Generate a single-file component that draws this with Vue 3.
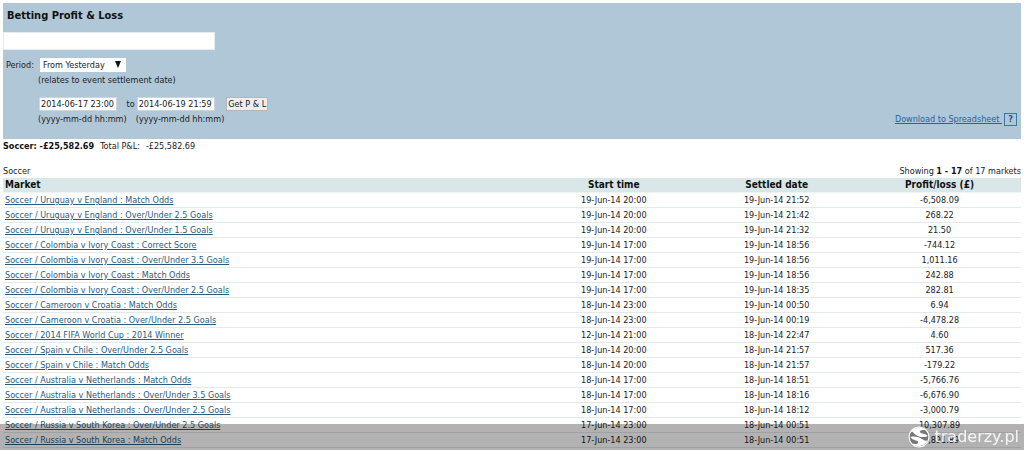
<script setup>
import { ref } from "vue";

const search = ref("");
const period = ref("yesterday");
const from = ref("2014-06-17 23:00");
const to = ref("2014-06-19 21:59");

const markets = [
  { name: "Uruguay v England : Match Odds", start: "19-Jun-14 20:00", settled: "19-Jun-14 21:52", profit: "-6,508.09" },
  { name: "Uruguay v England : Over/Under 2.5 Goals", start: "19-Jun-14 20:00", settled: "19-Jun-14 21:42", profit: "268.22" },
  { name: "Uruguay v England : Over/Under 1.5 Goals", start: "19-Jun-14 20:00", settled: "19-Jun-14 21:32", profit: "21.50" },
  { name: "Colombia v Ivory Coast : Correct Score", start: "19-Jun-14 17:00", settled: "19-Jun-14 18:56", profit: "-744.12" },
  { name: "Colombia v Ivory Coast : Over/Under 3.5 Goals", start: "19-Jun-14 17:00", settled: "19-Jun-14 18:56", profit: "1,011.16" },
  { name: "Colombia v Ivory Coast : Match Odds", start: "19-Jun-14 17:00", settled: "19-Jun-14 18:56", profit: "242.88" },
  { name: "Colombia v Ivory Coast : Over/Under 2.5 Goals", start: "19-Jun-14 17:00", settled: "19-Jun-14 18:35", profit: "282.81" },
  { name: "Cameroon v Croatia : Match Odds", start: "18-Jun-14 23:00", settled: "19-Jun-14 00:50", profit: "6.94" },
  { name: "Cameroon v Croatia : Over/Under 2.5 Goals", start: "18-Jun-14 23:00", settled: "19-Jun-14 00:19", profit: "-4,478.28" },
  { name: "2014 FIFA World Cup : 2014 Winner", start: "12-Jun-14 21:00", settled: "18-Jun-14 22:47", profit: "4.60" },
  { name: "Spain v Chile : Over/Under 2.5 Goals", start: "18-Jun-14 20:00", settled: "18-Jun-14 21:57", profit: "517.36" },
  { name: "Spain v Chile : Match Odds", start: "18-Jun-14 20:00", settled: "18-Jun-14 21:57", profit: "-179.22" },
  { name: "Australia v Netherlands : Match Odds", start: "18-Jun-14 17:00", settled: "18-Jun-14 18:51", profit: "-5,766.76" },
  { name: "Australia v Netherlands : Over/Under 3.5 Goals", start: "18-Jun-14 17:00", settled: "18-Jun-14 18:16", profit: "-6,676.90" },
  { name: "Australia v Netherlands : Over/Under 2.5 Goals", start: "18-Jun-14 17:00", settled: "18-Jun-14 18:12", profit: "-3,000.79" },
  { name: "Russia v South Korea : Over/Under 2.5 Goals", start: "17-Jun-14 23:00", settled: "18-Jun-14 00:51", profit: "10,307.89" },
  { name: "Russia v South Korea : Match Odds", start: "17-Jun-14 23:00", settled: "18-Jun-14 00:51", profit: "-7,891.89" },
];
</script>

<template>
  <main class="page">
    <form class="panel" @submit.prevent>
      <div class="filters">
        <h1>Betting Profit &amp; Loss</h1>
        <input v-model="search" class="search" type="text" aria-label="Account" />
        <div class="period">
          <label for="period">Period:</label>
          <span class="select-box">
            <select id="period" v-model="period">
              <option value="yesterday">From Yesterday</option>
              <option value="today">Today</option>
            </select>
            <svg class="arrow" viewBox="0 0 8 8" aria-hidden="true"><path d="M1 0h6L4 7z" fill="#111" /></svg>
          </span>
        </div>
        <div class="note">(relates to event settlement date)</div>
        <div class="dates">
          <div class="date">
            <input id="from" v-model="from" type="text" />
            <label for="from">(yyyy-mm-dd hh:mm)</label>
          </div>
          <span class="until">to</span>
          <div class="date">
            <input id="to" v-model="to" type="text" />
            <label for="to">(yyyy-mm-dd hh:mm)</label>
          </div>
          <button class="submit" type="submit">Get P &amp; L</button>
        </div>
      </div>
      <div class="download">
        <a href="#">Download to Spreadsheet&nbsp;</a>
        <button class="help" type="button">?</button>
      </div>
    </form>

    <div class="totals"><b>Soccer: -£25,582.69</b><span>Total P&amp;L:</span><span>-£25,582.69</span></div>

    <div class="summary">
      <span>Soccer</span>
      <span>Showing <b>1 - 17</b> of 17 markets</span>
    </div>

    <table>
      <thead>
        <tr>
          <th>Market</th>
          <th>Start time</th>
          <th>Settled date</th>
          <th>Profit/loss (£)</th>
        </tr>
      </thead>
      <tbody>
        <tr v-for="market in markets" :key="market.name">
          <td><a href="#">Soccer / {{ market.name }}</a></td>
          <td>{{ market.start }}</td>
          <td>{{ market.settled }}</td>
          <td>{{ market.profit }}</td>
        </tr>
      </tbody>
    </table>

    <footer class="brand">
      <svg viewBox="0 0 20 20" aria-hidden="true">
        <circle cx="10" cy="10" r="9" fill="#777" stroke="#fff" stroke-width="1" />
        <path d="M3 5C6 1 12 0 16 4c-3-1-6 0-5 2 1 1 5 1 7 3-4 2-8 1-11-1C5 7 5 5 3 5z" fill="#fff" />
        <path d="M2 10c4-1 8 0 11 2 2 1 3 2 5 1-3 6-10 7-14 3 3 1 6 0 5-2-1-1-5-1-7-4z" fill="#fff" />
      </svg>
      <span>traderzy.pl</span>
    </footer>
  </main>
</template>

<style>
body {
  margin: 0;
  background: #fff;
}
</style>

<style scoped>
.page {
  padding: 3px 3px 0;
  font-family: "DejaVu Sans Condensed", "DejaVu Sans", sans-serif;
  font-size: 9px;
  line-height: 14px;
  color: #222;
}

input,
select,
button {
  box-sizing: border-box;
  margin: 0;
  font: inherit;
  color: inherit;
}

.panel {
  display: flex;
  justify-content: space-between;
  align-items: flex-end;
  padding: 4px 4px 13px 0;
  background: #b0c7d7;
}

h1 {
  margin: 0 0 8px 4px;
  font-size: 11px;
  line-height: 17px;
  color: #111;
}

.search {
  display: block;
  width: 212px;
  height: 18px;
  padding: 0 4px;
  border: 1px solid #e4edf1;
  background: #fff;
}

.period {
  display: flex;
  align-items: center;
  gap: 6px;
  margin: 8px 0 0 3px;
}

.select-box {
  position: relative;
}

select {
  display: block;
  width: 86px;
  height: 14px;
  padding: 0 3px;
  border: 0;
  background: #fff;
  appearance: none;
}

.arrow {
  position: absolute;
  top: 3px;
  right: 4px;
  width: 8px;
  height: 8px;
  pointer-events: none;
}

.note {
  margin: 1px 0 10px 35px;
}

.dates {
  display: flex;
  align-items: flex-start;
  margin-left: 35px;
}

.date {
  display: flex;
  flex-direction: column;
  gap: 1px;
}

.date input {
  width: 78px;
  height: 14px;
  margin-left: 1px;
  padding: 0 1px;
  border: 1px solid #cbd5db;
  background: #fff;
}

.until {
  margin-right: 1px;
}

.submit {
  height: 14px;
  margin-left: 2px;
  padding: 0 1px;
  border: 1px solid #b5b5b5;
  background: #eee;
  line-height: 12px;
}

.download {
  display: flex;
  align-items: center;
  gap: 2px;
}

a {
  color: #2a5c80;
}

.download a {
  color: #2464a0;
}

.help {
  width: 13px;
  height: 13px;
  padding: 0;
  border: 1px solid #3b75a8;
  background: transparent;
  color: #22588a;
  font-weight: bold;
  line-height: 11px;
}

.totals {
  display: flex;
  gap: 6px;
}

b {
  color: #111;
}

.summary {
  display: flex;
  justify-content: space-between;
  margin-top: 11px;
}

table {
  width: 100%;
  border-collapse: collapse;
  table-layout: fixed;
}

th,
td {
  box-sizing: border-box;
  width: 16%;
  padding: 0 2px;
  text-align: center;
}

th:first-child,
td:first-child {
  width: 52%;
  text-align: left;
}

th {
  border-bottom: 1px solid #edf4f5;
  background: #d9e7e9;
  color: #111;
  font-size: 10px;
}

td {
  border-bottom: 1px solid #e4e9eb;
}

.brand {
  position: fixed;
  right: 0;
  bottom: 0;
  left: 0;
  display: flex;
  justify-content: flex-end;
  align-items: center;
  gap: 4px;
  height: 26px;
  padding-right: 5px;
  background: rgba(0, 0, 0, 0.3);
  color: #f4f4f4;
  font-family: "DejaVu Sans", sans-serif;
  font-size: 16px;
}

.brand svg {
  width: 22px;
  height: 22px;
}
</style>
